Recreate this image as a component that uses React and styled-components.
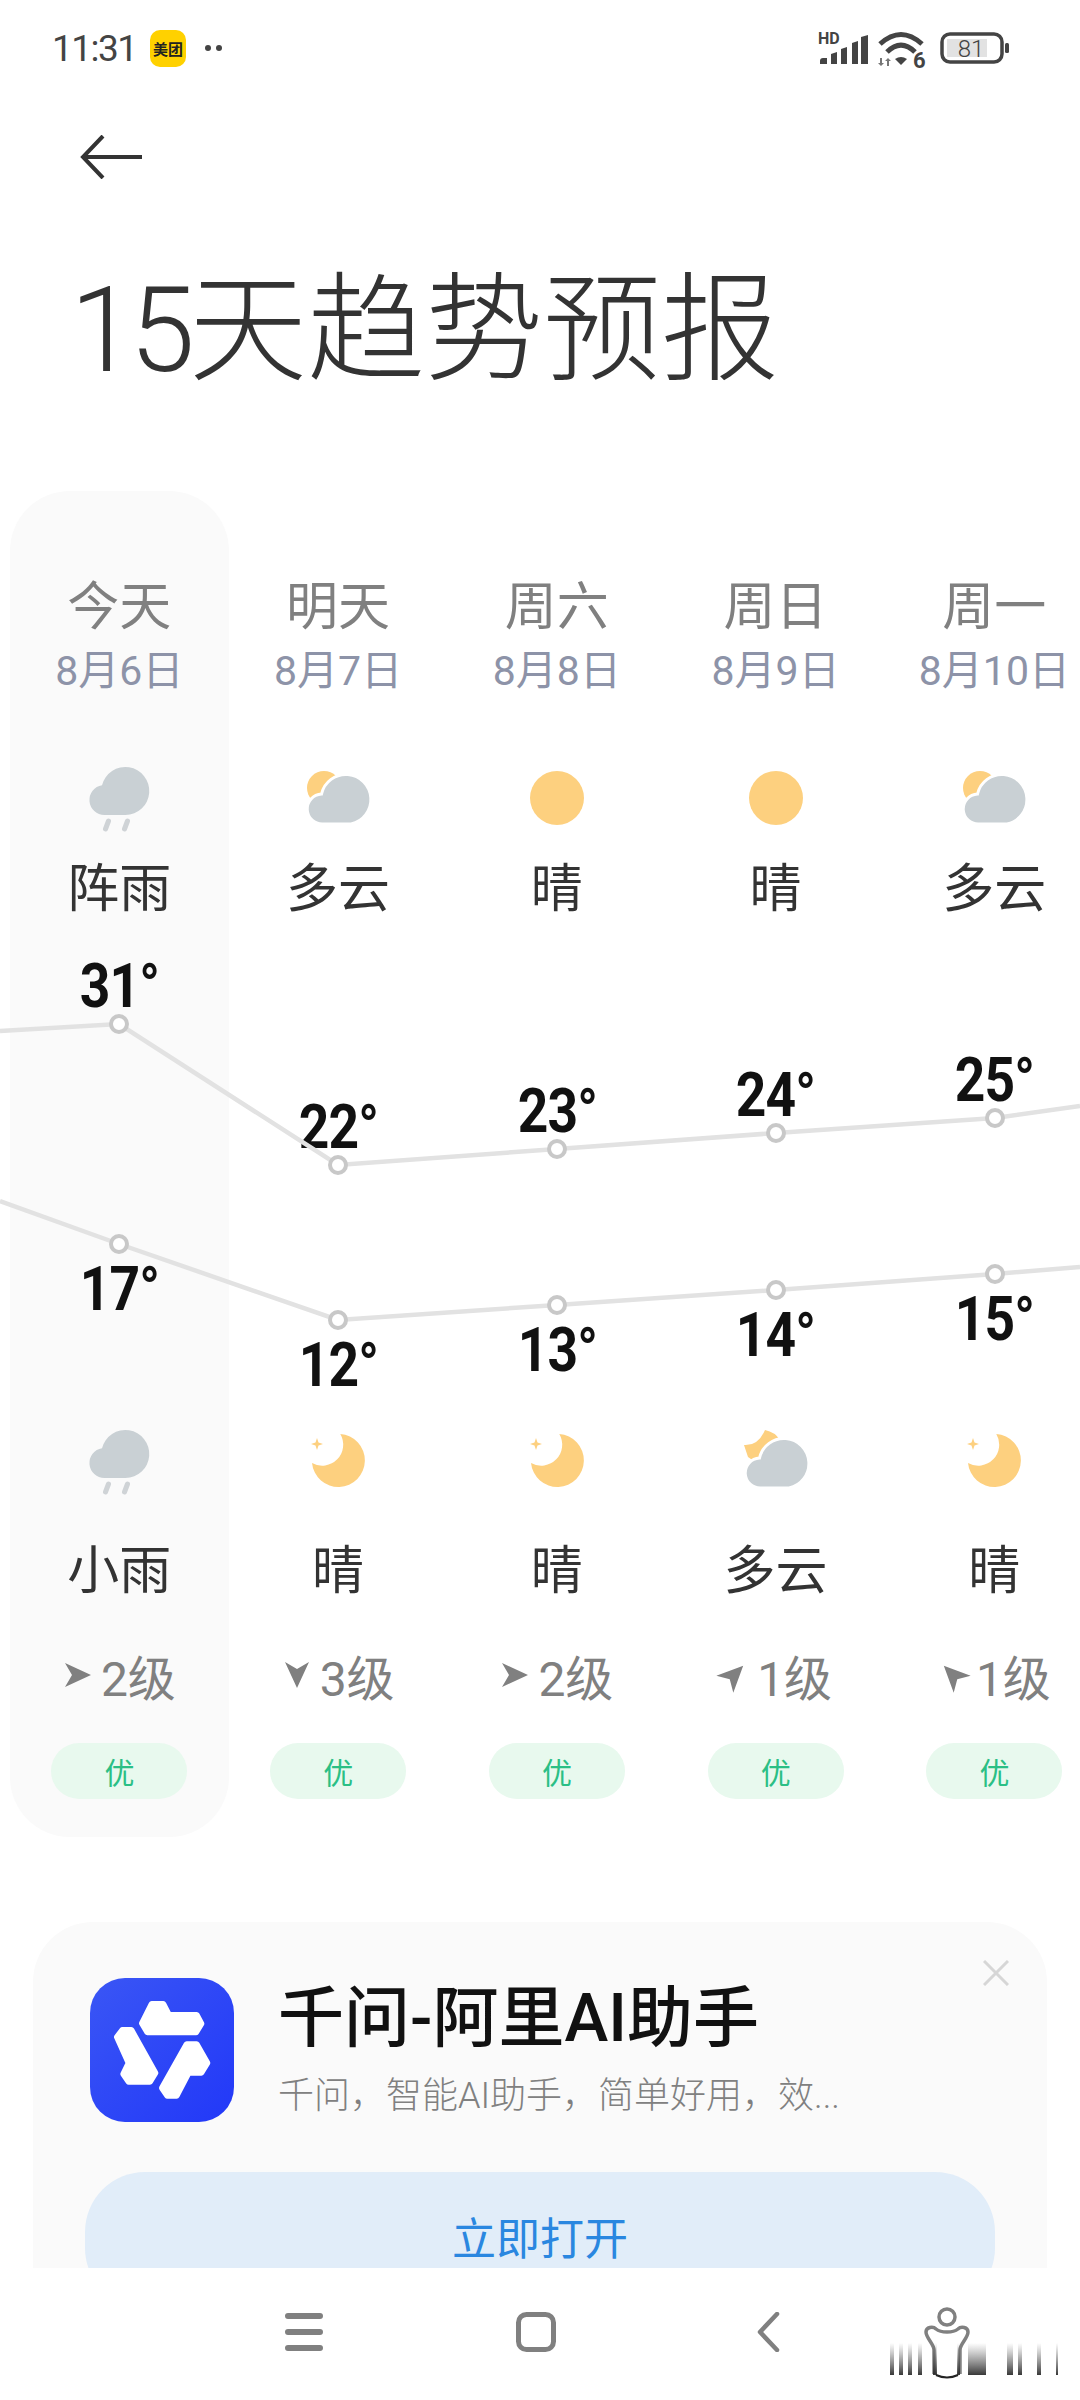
import React from "react";
import styled, { createGlobalStyle } from "styled-components";

const GlobalStyle = createGlobalStyle`
html, body {
    margin: 0;
    padding: 0;
    background: #fff;
}
* {
    box-sizing: border-box;
}
`

const FONT = `Roboto, "Noto Sans CJK SC", sans-serif`

const Page = styled.div`
width: 1080px;
height: 2400px;
display: flex;
flex-direction: column;
position: relative;
overflow: hidden;
background: #fff;
font-family: ${FONT};
`

const Main = styled.main`
flex: 1;
min-height: 0;
overflow: hidden;
`

const StatusBar = styled.div`
height: 96px;
display: flex;
align-items: center;
padding: 0 70px 0 52px;
color: #444;
`

const Clock = styled.span`
font-size: 37px;
font-weight: 400;
letter-spacing: -1.5px;
width: 98px;
`

const AppBadge = styled.span`
width: 36px;
height: 37px;
border-radius: 10px;
background: #ffd100;
color: #222;
font-size: 15px;
font-weight: 700;
display: flex;
align-items: center;
justify-content: center;
white-space: nowrap;
`

const MoreDots = styled.span`
display: flex;
gap: 5px;
margin-left: 19px;
i {
    width: 6px;
    height: 6px;
    border-radius: 50%;
    background: #444;
}
`

const StatusIcons = styled.div`
margin-left: auto;
display: flex;
align-items: center;
gap: 8px;
`

const BackIcon = styled.svg`
display: block;
margin: 39px 0 0 80px;
`

const PageTitle = styled.h1`
margin: 82px 0 0;
padding-left: 70px;
height: 140px;
line-height: 140px;
font-size: 118px;
font-weight: 300;
color: #333;
`

const TitleDigits = styled.span`
letter-spacing: -6px;
`

const Forecast = styled.section`
position: relative;
margin-top: 90px;
height: 1346px;
padding-left: 10px;
display: grid;
grid-template-columns: repeat(5, 218.75px);
`

const LineLayer = styled.svg`
position: absolute;
left: 0;
top: 0;
`

const Column = styled.div`
height: 1346px;
padding-top: 87px;
display: flex;
flex-direction: column;
align-items: center;
background: ${(p) => (p.$today ? "#fafafa" : "transparent")};
border-radius: 60px;
`

const DayName = styled.div`
height: 60px;
line-height: 60px;
font-size: 52px;
color: #808080;
`

const DateText = styled.div`
margin-top: 8px;
height: 50px;
line-height: 50px;
font-size: 41px;
color: #8d93a8;
white-space: nowrap;
`

const WeatherIcon = styled.svg`
display: block;
flex-shrink: 0;
margin-top: ${(p) => p.$gap}px;
`

const WeatherText = styled.div`
margin-top: ${(p) => p.$gap}px;
height: 60px;
line-height: 60px;
font-size: 52px;
color: #333;
`

const ChartArea = styled.div`
position: relative;
width: 100%;
height: 481px;
`

const Temp = styled.span`
position: absolute;
left: 0;
right: 0;
text-align: center;
height: 60px;
line-height: 60px;
font-size: 62px;
font-weight: 700;
letter-spacing: -1px;
color: #111;
transform: scaleX(0.86);
`

const Wind = styled.div`
margin-top: 43px;
height: 60px;
display: flex;
align-items: center;
gap: 8px;
font-size: 48px;
color: #808080;
white-space: nowrap;
`

const WindArrow = styled.svg`
display: block;
transform: rotate(${(p) => p.$angle}deg);
`

const Quality = styled.div`
margin-top: 38px;
width: 136px;
height: 56px;
border-radius: 28px;
background: #e8f9ee;
color: #2bbf85;
font-size: 30px;
display: flex;
align-items: center;
justify-content: center;
`

const AdCard = styled.section`
position: relative;
margin: 85px 33px 0;
padding: 56px 52px;
height: 480px;
background: #fafafa;
border-radius: 60px;
`

const AdRow = styled.div`
display: flex;
align-items: center;
gap: 44px;
padding-left: 5px;
`

const AdText = styled.div`
display: flex;
flex-direction: column;
gap: 12px;
`

const AdTitle = styled.div`
font-size: 66px;
font-weight: 500;
line-height: 80px;
color: #111;
white-space: nowrap;
`

const AdDesc = styled.div`
font-size: 36px;
line-height: 50px;
font-weight: 300;
color: #808080;
white-space: nowrap;
`

const CloseIcon = styled.svg`
position: absolute;
top: 38px;
right: 38px;
`

const OpenButton = styled.div`
margin-top: 50px;
height: 136px;
border-radius: 60px;
background: #e1edf9;
color: #2a87e0;
font-size: 44px;
line-height: 1;
display: flex;
align-items: center;
justify-content: center;
`

const NavBar = styled.nav`
height: 132px;
background: #fff;
display: flex;
align-items: flex-start;
gap: 192px;
padding: 44px 0 0 284px;
`

const Watermark = styled.svg`
position: absolute;
right: 0;
bottom: 0;
`

const HIGH = [
    { label: "31", y: 1023 },
    { label: "22", y: 1164 },
    { label: "23", y: 1148 },
    { label: "24", y: 1132 },
    { label: "25", y: 1117 },
]
const LOW = [
    { label: "17", y: 1243 },
    { label: "12", y: 1319 },
    { label: "13", y: 1304 },
    { label: "14", y: 1289 },
    { label: "15", y: 1273 },
]

const DAYS = [
    { name: "今天", date: "8月6日", icon: "rain", text: "阵雨", nightIcon: "rain", nightText: "小雨", wind: "2级", angle: 0, today: true },
    { name: "明天", date: "8月7日", icon: "cloudy", text: "多云", nightIcon: "moon", nightText: "晴", wind: "3级", angle: 90 },
    { name: "周六", date: "8月8日", icon: "sun", text: "晴", nightIcon: "moon", nightText: "晴", wind: "2级", angle: 0 },
    { name: "周日", date: "8月9日", icon: "sun", text: "晴", nightIcon: "nightCloudy", nightText: "多云", wind: "1级", angle: -45 },
    { name: "周一", date: "8月10日", icon: "cloudy", text: "多云", nightIcon: "moon", nightText: "晴", wind: "1级", angle: 225 },
]

const FORECAST_TOP = 490
const CHART_TOP = 919
const COL_X = [119, 338, 557, 776, 995]

const CLOUD = "#c9d0d4"
const AMBER = "#fdd07f"

function Glyph({ type, gap }) {
    return (
        <WeatherIcon $gap={gap} width="90" height="90" viewBox="0 0 90 90">
            {type === "rain" && (
                <g transform="translate(1.500 1)">
                    <path fill={CLOUD} d="M29 61a15 15 0 0 1-2.500-29.800A24 24 0 1 1 50 61Z" />
                    <path stroke="#cfd3d6" strokeWidth="5" strokeLinecap="round" d="M33 67l-3 8M52 67l-3 8" />
                </g>
            )}
            {type === "cloudy" && (
                <>
                    <circle cx="31" cy="35" r="17" fill={AMBER} />
                    <path fill={CLOUD} stroke="#fff" strokeWidth="3" d="M30 71a15 15 0 0 1-1.500-30A25 25 0 1 1 58 71Z" />
                </>
            )}
            {type === "sun" && <circle cx="45" cy="45" r="27" fill={AMBER} />}
            {type === "moon" && (
                <g transform="translate(-1 -1)">
                    <path fill={AMBER} d="M48.300 19A26.500 26.500 0 1 1 20 48A21 21 0 0 0 48.300 19Z" />
                    <path fill={AMBER} d="M25 23l1.500 4.500L31 29l-4.500 1.500L25 35l-1.500-4.500L19 29l4.500-1.500Z" />
                </g>
            )}
            {type === "nightCloudy" && (
                <>
                    <path fill={AMBER} d="M13 29Q27 30 34 14Q44 16 49 24L30 50L17 41Z" />
                    <path fill={CLOUD} stroke="#fff" strokeWidth="3" d="M30 72a15 15 0 0 1-1.500-30A25 25 0 1 1 58 72Z" />
                </>
            )}
        </WeatherIcon>
    )
}

function TempLine({ points, leftY, rightY }) {
    const coords = [`0,${leftY}`, ...points.map((p, i) => `${COL_X[i]},${p.y}`), `1080,${rightY}`]
    return (
        <>
            <polyline points={coords.join(" ")} fill="none" stroke="#e2e2e2" strokeWidth="4.500" />
            {points.map((p, i) => (
                <circle key={i} cx={COL_X[i]} cy={p.y} r="8" fill="#fff" stroke="#c8c8c8" strokeWidth="4" />
            ))}
        </>
    )
}

function StatusGlyphs() {
    return (
        <StatusIcons>
            <svg width="52" height="44" viewBox="0 0 52 44">
                <text x="0" y="18" fontSize="16" fontWeight="700" fill="#444" fontFamily="Roboto, sans-serif">HD</text>
                <path fill="#444" d="M2 38v-3a3 3 0 0 1 3-3h4v6ZM13 28l6-2v12h-6ZM23 23l6-2v17h-6ZM34 17l6-2v23h-6ZM43 11l7-2v29h-7Z" />
            </svg>
            <svg width="54" height="56" viewBox="0 -6 54 56">
                <path fill="none" stroke="#444" strokeWidth="5" d="M2 18Q23 -1 44 18M9 26Q23 12 37 26" />
                <path fill="#444" d="M23 39l-6-6q6-4 12 0Z" />
                <path fill="#777" d="M2 32h2v5h2l-3 3-3-3h2ZM9 40h2v-5h2l-3-3-3 3h2Z" />
                <text x="35" y="42" fontSize="22" fontWeight="700" fill="#444" fontFamily="Roboto, sans-serif">6</text>
            </svg>
            <svg width="70" height="32" viewBox="0 0 70 32">
                <rect x="2" y="2" width="60" height="28" rx="8" fill="none" stroke="#444" strokeWidth="3.500" />
                <rect x="7" y="7" width="40" height="18" fill="#e2e2e2" />
                <text x="31" y="25" textAnchor="middle" fontSize="24" fontWeight="300" fill="#444" fontFamily="Roboto, sans-serif">81</text>
                <rect x="65" y="11" width="4" height="10" rx="1.500" fill="#444" />
            </svg>
        </StatusIcons>
    )
}

function AppLogo() {
    return (
        <svg width="144" height="144" viewBox="60 50 432 432" style={{ flexShrink: 0 }}>
            <defs>
                <linearGradient id="logoBlue" x1="0" y1="0" x2="1" y2="1">
                    <stop offset="0" stopColor="#3a56f5" />
                    <stop offset="1" stopColor="#2238f8" />
                </linearGradient>
            </defs>
            <rect x="60" y="50" width="432" height="432" rx="105" fill="url(#logoBlue)" />
            <g fill="#fff" stroke="#fff" strokeWidth="18" strokeLinejoin="round">
                <path d="M216 186L245 128H280L297 161H380L394 187L378 213H232Z" />
                <path d="M141 227L157 206H184L256 335L240 361H176L160 338L176 305Z" />
                <path d="M276 380L350 249H380L412 305L394 334H356L320 403H292Z" />
            </g>
        </svg>
    )
}

export default function App() {
    return (
        <Page>
            <GlobalStyle />
            <Main>
                <StatusBar>
                    <Clock>11:31</Clock>
                    <AppBadge>美团</AppBadge>
                    <MoreDots><i /><i /></MoreDots>
                    <StatusGlyphs />
                </StatusBar>
                <BackIcon width="62" height="44" viewBox="0 0 62 44">
                    <path fill="none" stroke="#333" strokeWidth="4" d="M62 22H3M23 1L3 22l20 21" />
                </BackIcon>
                <PageTitle><TitleDigits>15</TitleDigits>天趋势预报</PageTitle>
                <Forecast>
                    {DAYS.map((d, i) => (
                        <Column key={d.name} $today={d.today}>
                            <DayName>{d.name}</DayName>
                            <DateText>{d.date}</DateText>
                            <Glyph type={d.icon} gap={57} />
                            <WeatherText $gap={17}>{d.text}</WeatherText>
                            <ChartArea>
                                <Temp style={{ top: HIGH[i].y - 38 - 30 - CHART_TOP }}>{HIGH[i].label}°</Temp>
                                <Temp style={{ top: LOW[i].y + 45 - 30 - CHART_TOP }}>{LOW[i].label}°</Temp>
                            </ChartArea>
                            <Glyph type={d.nightIcon} gap={15} />
                            <WeatherText $gap={36}>{d.nightText}</WeatherText>
                            <Wind>
                                <WindArrow $angle={d.angle} width="30" height="30" viewBox="0 0 30 30">
                                    <path fill="#808080" d="M28 15L2 27l7-12L2 3Z" />
                                </WindArrow>
                                {d.wind}
                            </Wind>
                            <Quality>优</Quality>
                        </Column>
                    ))}
                    <LineLayer width="1080" height="1346" viewBox={`0 ${FORECAST_TOP} 1080 1346`}>
                        <TempLine points={HIGH} leftY={1030} rightY={1105} />
                        <TempLine points={LOW} leftY={1200} rightY={1266} />
                    </LineLayer>
                </Forecast>
                <AdCard>
                    <CloseIcon width="26" height="26" viewBox="0 0 26 26">
                        <path stroke="#d6d6d6" strokeWidth="3" d="M1 1l24 24M25 1L1 25" />
                    </CloseIcon>
                    <AdRow>
                        <AppLogo />
                        <AdText>
                            <AdTitle>千问-阿里AI助手</AdTitle>
                            <AdDesc>千问，智能AI助手，简单好用，效...</AdDesc>
                        </AdText>
                    </AdRow>
                    <OpenButton>立即打开</OpenButton>
                </AdCard>
            </Main>
            <NavBar>
                <svg width="40" height="40" viewBox="0 0 40 40">
                    <path stroke="#808080" strokeWidth="6" strokeLinecap="round" d="M4 4h32M4 20h32M4 36h32" />
                </svg>
                <svg width="40" height="40" viewBox="0 0 40 40">
                    <rect x="2.500" y="2.500" width="35" height="35" rx="8" fill="none" stroke="#808080" strokeWidth="5" />
                </svg>
                <svg width="40" height="40" viewBox="0 0 40 40">
                    <path fill="none" stroke="#808080" strokeWidth="4.500" strokeLinecap="round" strokeLinejoin="round" d="M29 2L12 20l17 18" />
                </svg>
            </NavBar>
            <Watermark width="210" height="110" viewBox="870 2290 210 110">
                <defs>
                    <linearGradient id="barFade" x1="0" y1="0" x2="0" y2="1">
                        <stop offset="0" stopColor="#555" stopOpacity="0" />
                        <stop offset="1" stopColor="#222" stopOpacity="0.9" />
                    </linearGradient>
                </defs>
                <circle cx="947" cy="2317" r="8" fill="none" stroke="#808080" strokeWidth="3.500" />
                <path fill="none" stroke="#808080" strokeWidth="3.500" strokeLinejoin="round" d="M934 2374V2350C934 2344 926 2338 926 2332C926 2327 933 2326 936 2329C941 2333 953 2333 958 2329C961 2326 968 2327 968 2332C968 2338 960 2344 960 2350V2374" />
                <path fill="none" stroke="#222" strokeWidth="2" d="M936 2375q11 5 22 0" />
                <rect x="890" y="2343" width="4" height="32" fill="url(#barFade)" />
                <rect x="899" y="2343" width="4" height="32" fill="url(#barFade)" />
                <rect x="908" y="2343" width="4" height="32" fill="url(#barFade)" />
                <rect x="918" y="2343" width="4" height="32" fill="url(#barFade)" />
                <rect x="933" y="2343" width="4" height="32" fill="url(#barFade)" />
                <rect x="957" y="2343" width="3" height="32" fill="url(#barFade)" />
                <rect x="968" y="2343" width="18" height="32" fill="url(#barFade)" />
                <rect x="1007" y="2343" width="6" height="32" fill="url(#barFade)" />
                <rect x="1018" y="2343" width="4" height="32" fill="url(#barFade)" />
                <rect x="1037" y="2343" width="4" height="32" fill="url(#barFade)" />
                <rect x="1056" y="2343" width="2" height="32" fill="url(#barFade)" />
            </Watermark>
        </Page>
    )
}
